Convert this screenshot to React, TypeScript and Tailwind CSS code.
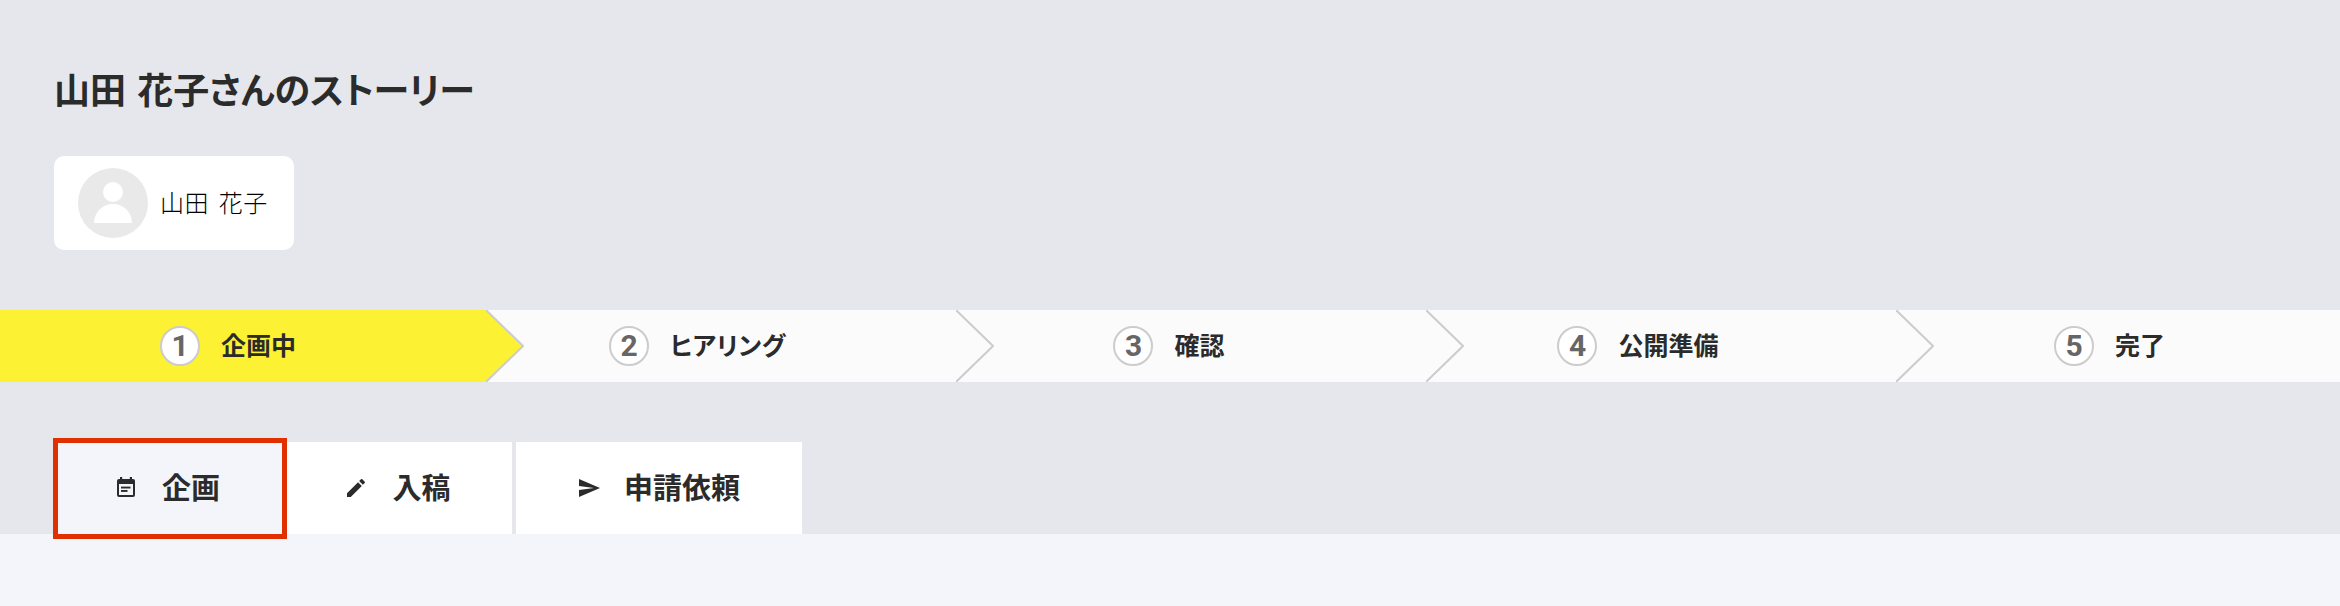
import { MdEdit, MdSend } from "react-icons/md";

const font = "[font-family:'Noto_Sans_CJK_JP','Noto_Sans',sans-serif]";

function Chevron({ fill }: { fill: string }) {
  return (
    <svg className="absolute top-0 left-full z-10" width="38" height="72" viewBox="0 0 38 72">
      <polygon points="0,0 37,36 0,72" fill={fill} />
      <polyline points="0,0 37,36 0,72" fill="none" stroke="#cccccc" strokeWidth="2" />
    </svg>
  );
}

function EventIcon() {
  return (
    <svg width="24" height="24" viewBox="0 0 24 24" fill="#2b2b2b" className="shrink-0">
      <path fillRule="evenodd" d="M6 1h2.2v2h7.6V1H18v2h1a2 2 0 0 1 2 2v14a2 2 0 0 1-2 2H5a2 2 0 0 1-2-2V5a2 2 0 0 1 2-2h1zM5 8v11h14V8z" />
      <rect x="7" y="10.6" width="9.5" height="1.9" />
      <rect x="7" y="14" width="6.5" height="1.9" />
    </svg>
  );
}

function Step({ n, label, active, last, w, pr, track }: { n: number; label: string; active?: boolean; last?: boolean; w: string; pr: string; track?: string }) {
  return (
    <div className={`relative flex h-[72px] items-center justify-center gap-[21px] ${w} ${pr} ${active ? "bg-[#fcf133]" : "bg-[#fbfbfb]"}`}>
      <span className="flex h-[40px] w-[40px] items-center justify-center rounded-full border-[2.5px] border-[#cccccc] bg-white text-[30px] leading-none font-bold text-[#666666] [font-family:'Roboto',sans-serif]">
        {n}
      </span>
      <span className={`pb-[3px] text-[25px] leading-none font-bold whitespace-nowrap text-[#2b2b2b] [font-feature-settings:'palt'] ${track ?? ""}`}>{label}</span>
      {!last && <Chevron fill={active ? "#fcf133" : "#fbfbfb"} />}
    </div>
  );
}

export default function App() {
  return (
    <div className={`flex h-[606px] w-[2340px] flex-col overflow-hidden bg-[#f4f5fa] ${font}`}>
      <div className="flex h-[534px] flex-col bg-[#e6e7ec]">
        <h1 className="mt-[62px] ml-[54px] text-[36px] leading-[52px] font-bold text-[#2b2b2b] [font-feature-settings:'palt'] [word-spacing:3px]">
          山田 花子さんのストーリー
        </h1>
        <div className="mt-[42px] ml-[54px] flex h-[94px] w-[240px] items-center rounded-[10px] bg-white pl-[24px]">
          <div className="flex h-[70px] w-[70px] items-center justify-center rounded-full bg-[#e9e9e9]">
            <svg width="40" height="44" viewBox="0 0 40 44">
              <circle cx="20" cy="11" r="10" fill="#ffffff" />
              <path d="M1 42 A19 19 0 0 1 39 42 Z" fill="#ffffff" />
            </svg>
          </div>
          <span className="ml-[12px] pb-[3px] text-[24px] leading-none font-light tracking-[0.5px] whitespace-nowrap text-black [word-spacing:4px]">山田 花子</span>
        </div>
        <div className="mt-[60px] flex">
          <Step n={1} label="企画中" active w="w-[486px]" pr="pr-[30px]" />
          <Step n={2} label="ヒアリング" w="w-[470px]" pr="pr-[47px]" track="tracking-[0.5px]" />
          <Step n={3} label="確認" w="w-[470px]" pr="pr-[44px]" />
          <Step n={4} label="公開準備" w="w-[470px]" pr="pr-[46px]" />
          <Step n={5} label="完了" last w="w-[444px]" pr="pr-[17px]" />
        </div>
        <div className="mt-[60px] ml-[53px] flex h-[92px] text-[29px] font-bold text-[#2b2b2b]">
          <div className="relative flex w-[234px] items-center justify-center gap-[24px] bg-[#f4f5fa] pr-[6px]">
            <EventIcon />
            <span className="pb-[3px]">企画</span>
            <div className="absolute -top-[4px] -bottom-[5px] left-0 right-0 border-[5px] border-[#e03000]" />
          </div>
          <div className="flex w-[225px] items-center justify-center gap-[24px] bg-white pr-[4px]">
            <MdEdit size={24} />
            <span className="pb-[3px]">入稿</span>
          </div>
          <div className="ml-[4px] flex w-[286px] items-center justify-center gap-[23px] bg-white pr-[1px]">
            <MdSend size={24} />
            <span className="pb-[3px]">申請依頼</span>
          </div>
        </div>
      </div>
    </div>
  );
}
